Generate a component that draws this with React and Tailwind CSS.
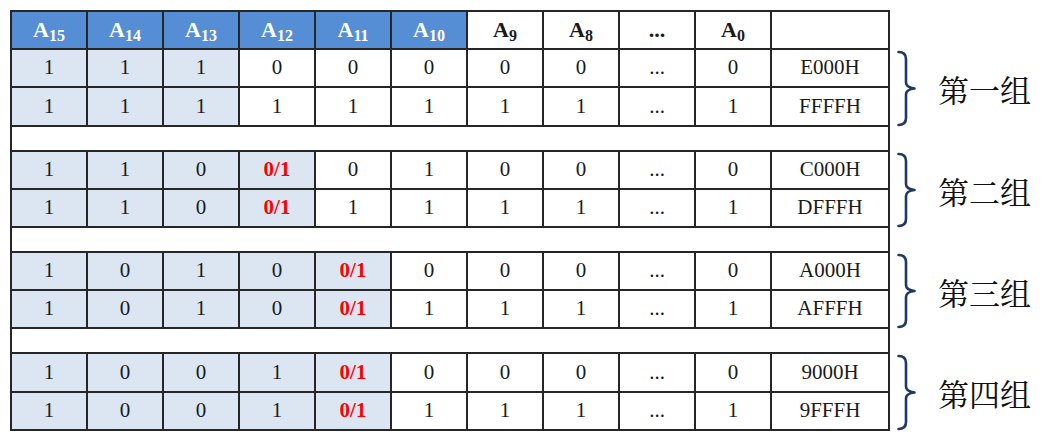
import React from "react";

const groups = [
  {
    label: "第一组",
    light: 3,
    rows: [
      { h: "h-[38px]", v: ["1", "1", "1", "0", "0", "0", "0", "0", "...", "0"], hex: "E000H" },
      { h: "h-[39px]", v: ["1", "1", "1", "1", "1", "1", "1", "1", "...", "1"], hex: "FFFFH" },
    ],
    bh: "h-[77px]",
    n: 77,
  },
  {
    label: "第二组",
    light: 4,
    rows: [
      { h: "h-[38px]", v: ["1", "1", "0", "0/1", "0", "1", "0", "0", "...", "0"], hex: "C000H" },
      { h: "h-[38px]", v: ["1", "1", "0", "0/1", "1", "1", "1", "1", "...", "1"], hex: "DFFFH" },
    ],
    bh: "h-[76px]",
    n: 76,
  },
  {
    label: "第三组",
    light: 5,
    rows: [
      { h: "h-[38px]", v: ["1", "0", "1", "0", "0/1", "0", "0", "0", "...", "0"], hex: "A000H" },
      { h: "h-[38px]", v: ["1", "0", "1", "0", "0/1", "1", "1", "1", "...", "1"], hex: "AFFFH" },
    ],
    bh: "h-[76px]",
    n: 76,
  },
  {
    label: "第四组",
    light: 5,
    rows: [
      { h: "h-[39px]", v: ["1", "0", "0", "1", "0/1", "0", "0", "0", "...", "0"], hex: "9000H" },
      { h: "h-[38px]", v: ["1", "0", "0", "1", "0/1", "1", "1", "1", "...", "1"], hex: "9FFFH" },
    ],
    bh: "h-[77px]",
    n: 77,
  },
];

const headers = [
  ["A", "15", true],
  ["A", "14", true],
  ["A", "13", true],
  ["A", "12", true],
  ["A", "11", true],
  ["A", "10", true],
  ["A", "9", false],
  ["A", "8", false],
  ["...", "", false],
  ["A", "0", false],
];

function Brace({ h }) {
  const m = h / 2;
  const d = `M2.5,2 Q10,2 10,9 L10,${m - 6} Q10,${m - 1} 18.5,${m} Q10,${m + 1} 10,${m + 6} L10,${h - 9} Q10,${h - 2} 2.5,${h - 2}`;
  return (
    <svg width="22" height={h} viewBox={`0 0 22 ${h}`} className="shrink-0">
      <path d={d} fill="none" stroke="#203864" strokeWidth="2.6" strokeLinecap="round" strokeLinejoin="round" />
    </svg>
  );
}

export default function App() {
  return (
    <div className="w-[1043px] h-[443px] bg-white flex pt-[10px] pl-[10px] font-[family-name:Liberation_Serif,Times_New_Roman,serif]">
      <div className="w-[880px] self-start border-t-2 border-l-2 border-[#262626]">
        <div className="flex h-[38px]">
          {headers.map(([a, s, blue], i) => (
            <div
              key={i}
              className={`w-[76px] shrink-0 border-r-2 border-b-2 border-[#262626] flex items-center justify-center font-bold text-[22px] font-[family-name:Liberation_Serif,Times_New_Roman,serif] ${
                blue ? "bg-[#558ED5] text-white" : "bg-white text-[#1a1a1a]"
              }`}
            >
              <span className="leading-none">
                {a}
                {s && <sub className="text-[16px]">{s}</sub>}
              </span>
            </div>
          ))}
          <div className="w-[118px] shrink-0 border-r-2 border-b-2 border-[#262626] bg-white" />
        </div>
        {groups.map((g, gi) => (
          <React.Fragment key={gi}>
            {gi > 0 && <div className="h-[25px] border-r-2 border-b-2 border-[#262626] bg-white" />}
            {g.rows.map((r, ri) => (
              <div key={ri} className={`flex ${r.h}`}>
                {r.v.map((v, ci) => (
                  <div
                    key={ci}
                    className={`w-[76px] shrink-0 border-r-2 border-b-2 border-[#262626] flex items-center justify-center text-[21px] font-[family-name:Liberation_Serif,Times_New_Roman,serif] ${
                      ci < g.light ? "bg-[#DCE6F2]" : "bg-white"
                    } ${v === "0/1" ? "text-[#FF0000] font-bold" : "text-[#1a1a1a]"}`}
                  >
                    {v}
                  </div>
                ))}
                <div className="w-[118px] shrink-0 border-r-2 border-b-2 border-[#262626] flex items-center justify-center text-[21px] text-[#1a1a1a] bg-white font-[family-name:Liberation_Serif,Times_New_Roman,serif]">
                  {r.hex}
                </div>
              </div>
            ))}
          </React.Fragment>
        ))}
      </div>
      <div className="flex flex-col pt-[40px] pl-[6px]">
        {groups.map((g, gi) => (
          <React.Fragment key={gi}>
            {gi > 0 && <div className="h-[25px]" />}
            <div className={`flex items-center ${g.bh}`}>
              <Brace h={g.n} />
              <span className="ml-[20px] text-[31px] leading-none text-[#111] font-[family-name:Noto_Serif_CJK_SC,serif]">
                {g.label}
              </span>
            </div>
          </React.Fragment>
        ))}
      </div>
    </div>
  );
}
